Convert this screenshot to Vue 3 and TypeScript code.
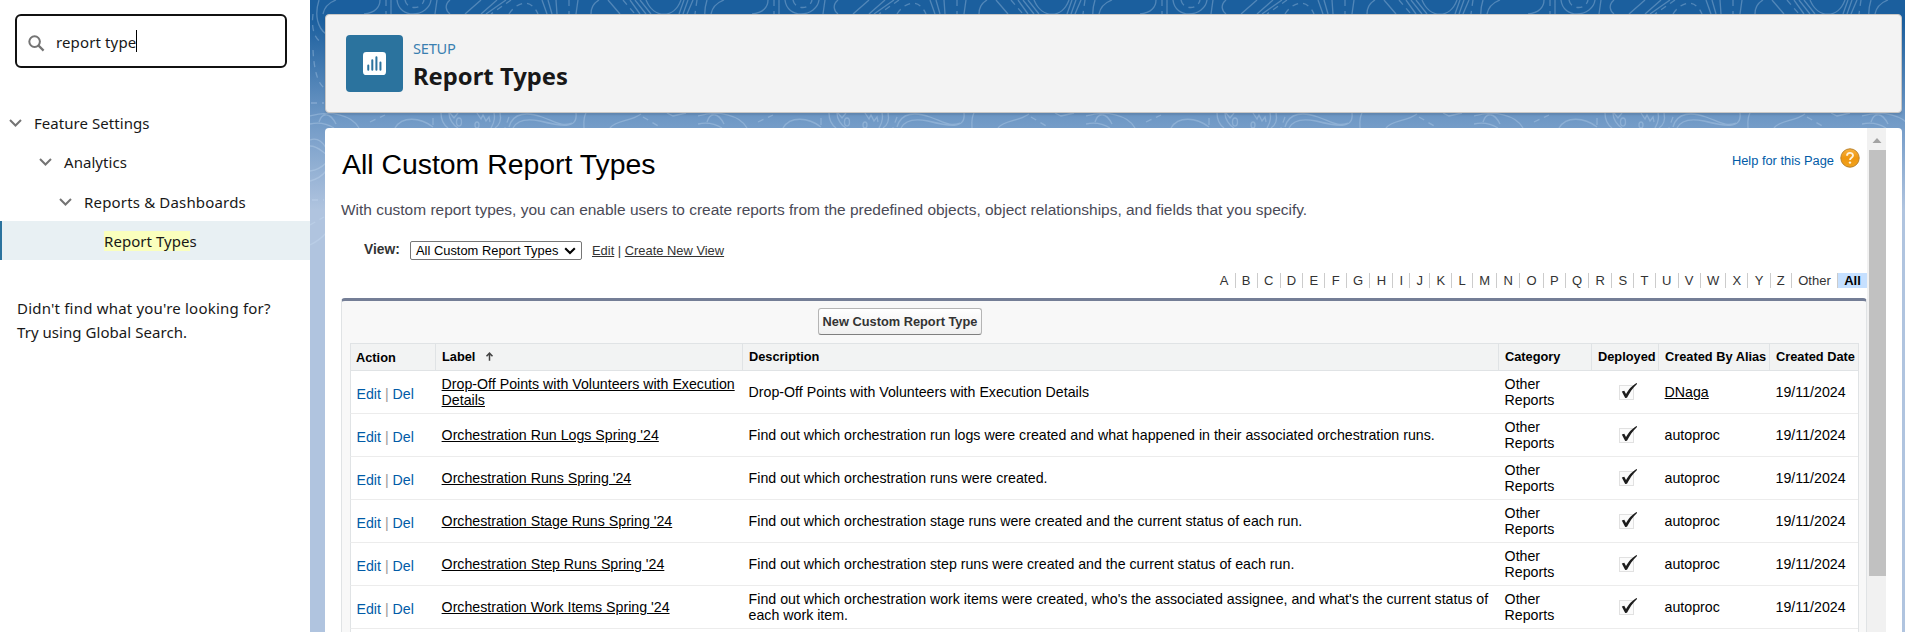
<script setup lang="ts">
interface ReportType {
  label: string
  description: string
  alias: string
  linked?: boolean
}

const letters: string[] = [...'ABCDEFGHIJKLMNOPQRSTUVWXYZ', 'Other']

const columns: string[] = ['Action', 'Label', 'Description', 'Category', 'Deployed', 'Created By Alias', 'Created Date']

const rows: ReportType[] = [
  {
    label: 'Drop-Off Points with Volunteers with Execution Details',
    description: 'Drop-Off Points with Volunteers with Execution Details',
    alias: 'DNaga',
    linked: true,
  },
  {
    label: "Orchestration Run Logs Spring '24",
    description:
      'Find out which orchestration run logs were created and what happened in their associated orchestration runs.',
    alias: 'autoproc',
  },
  {
    label: "Orchestration Runs Spring '24",
    description: 'Find out which orchestration runs were created.',
    alias: 'autoproc',
  },
  {
    label: "Orchestration Stage Runs Spring '24",
    description: 'Find out which orchestration stage runs were created and the current status of each run.',
    alias: 'autoproc',
  },
  {
    label: "Orchestration Step Runs Spring '24",
    description: 'Find out which orchestration step runs were created and the current status of each run.',
    alias: 'autoproc',
  },
  {
    label: "Orchestration Work Items Spring '24",
    description:
      "Find out which orchestration work items were created, who's the associated assignee, and what's the current status of each work item.",
    alias: 'autoproc',
  },
]
</script>

<template>
  <div class="app">
    <aside class="sidebar">
      <div class="search">
        <svg class="search-icon" width="17" height="17" viewBox="0 0 17 17">
          <circle cx="6.6" cy="6.6" r="5.3" fill="none" stroke="#747474" stroke-width="2" />
          <path d="M10.6 10.6L15.6 15.6" stroke="#747474" stroke-width="2.2" />
        </svg>
        <span class="query">report type</span><span class="caret"></span>
      </div>
      <nav class="tree">
        <div class="node level-1">
          <svg class="chev" width="13" height="8" viewBox="0 0 13 8"><path d="M1 1L6.5 6.5L12 1" /></svg>
          <span>Feature Settings</span>
        </div>
        <div class="node level-2">
          <svg class="chev" width="13" height="8" viewBox="0 0 13 8"><path d="M1 1L6.5 6.5L12 1" /></svg>
          <span>Analytics</span>
        </div>
        <div class="node level-3">
          <svg class="chev" width="13" height="8" viewBox="0 0 13 8"><path d="M1 1L6.5 6.5L12 1" /></svg>
          <span class="wide">Reports &amp; Dashboards</span>
        </div>
        <div class="node selected"><span><mark>Report Type</mark>s</span></div>
      </nav>
      <p class="hint">Didn't find what you're looking for?<br /><span class="hint-action">Try using Global Search.</span></p>
    </aside>

    <main class="main">
      <svg class="topo" width="1595" height="260">
        <defs>
          <pattern id="contours" width="388" height="260" patternUnits="userSpaceOnUse">
            <g class="contour">
              <path d="M26 0C18 3 14 9 13 14M70 0C70 7 65 13 54 14M81 0V14M87 0C88 10 96 14 103 14C112 14 120 8 121 0M127 0L125 14M140 0C134 5 136 11 140 14" />
              <path d="M171 0L155 14M187 0L171 14M196 0L176 14M232 0L237 14M238 0L242 14M246 0L247 14M268 0L266 14M289 0C282 4 281 9 281 14" />
              <path d="M298 0L310 14M320 0L330 14M325 0L336 14M330 0L341 14M336 0C344 19 364 19 371 0M374 0L369 14M378 0L373 14M383 0L377 14" />
              <path class="dash" d="M76 0V14M95 0C97 10 112 10 114 0M201 0L181 14M199 14C205 4 220 -4 228 14M259 0V14M313 0L325 14M387 0L385 14" />
              <path d="M0 124C8 122 16 123 24 128M9 122C12 112 20 112 26 124M0 116C20 110 42 115 49 128M85 128C92 116 110 117 123 127M123 118V125" />
              <path d="M131 113C131 121 134 125 138 128M139 113c0 6 4 12 9 15M140 113l4 5l4 -5M167 113l4 6l2 -4l3 6l3 -4l1 5M190 113C192 122 188 126 185 128M184 113C186 120 183 124 181 128" />
              <ellipse cx="149" cy="122" rx="2.5" ry="4" />
              <ellipse cx="167" cy="125" rx="2" ry="3" />
              <path d="M203 128C208 118 220 119 230 121C250 126 268 130 266 113M199 127C203 112 218 112 232 117C246 122 252 127 262 123M276 113C273 118 274 124 274 128M300 128C306 120 320 122 331 114M357 113l6 3l13 -3" />
              <path class="dash" d="M60 122L75 115M199 117L195 128M333 117L350 127" />
              <path d="M9 0C4 16 8 28 16 34M0 140C8 137 13 143 16 148M0 146C8 146 12 152 16 154M0 171C8 170 12 167 16 163M0 181C8 179 12 176 16 171M0 245Q10 240 16 233" />
              <path class="dash" d="M3 14C1 30 5 40 13 43M3 50C4 70 8 85 15 88M1 103H14M2 200H14M0 225L14 217" />
            </g>
          </pattern>
        </defs>
        <rect width="1595" height="260" fill="url(#contours)" />
      </svg>

      <header class="page-header">
        <div class="setup-icon">
          <svg width="23" height="23" viewBox="0 0 24 24">
            <rect width="24" height="24" rx="3.5" fill="#fff" />
            <path d="M5.5 14V18.5M9.7 8.5V18.5M14 5.5V18.5M18.2 11V18.5" stroke="#2b739e" stroke-width="2.1" stroke-linecap="round" />
          </svg>
        </div>
        <div class="heading">
          <span class="eyebrow">SETUP</span>
          <h1>Report Types</h1>
        </div>
      </header>

      <section class="panel">
        <div class="content">
          <div class="title-row">
            <h2>All Custom Report Types</h2>
            <a class="help">
              <span>Help for this Page</span>
              <svg width="20" height="20" viewBox="0 0 20 20">
                <defs>
                  <linearGradient id="orb" x1="0" y1="0" x2="0" y2="1">
                    <stop offset="0" stop-color="#f9b23f" />
                    <stop offset="0.5" stop-color="#ee960f" />
                    <stop offset="1" stop-color="#f2a31c" />
                  </linearGradient>
                </defs>
                <circle cx="10" cy="10" r="9.2" fill="url(#orb)" stroke="#b9822c" stroke-width="1" />
                <path d="M7 7.8C7 3.9 13 3.9 13 7.5C13 9.8 10 9.7 10 12" fill="none" stroke="#fff3dc" stroke-width="1.9" />
                <circle cx="10" cy="14.6" r="1.2" fill="#fff3dc" />
              </svg>
            </a>
          </div>
          <p class="intro">With custom report types, you can enable users to create reports from the predefined objects, object relationships, and fields that you specify.</p>
          <div class="view-row">
            <b>View:</b>
            <div class="select">
              <span>All Custom Report Types</span>
              <svg width="12" height="8" viewBox="0 0 12 8"><path d="M1.2 1.2L6 6L10.8 1.2" fill="none" stroke="#000" stroke-width="2.1" /></svg>
            </div>
            <span class="view-links"><u>Edit</u> | <u>Create New View</u></span>
          </div>
          <div class="rolodex">
            <span v-for="l in letters" :key="l" class="letter">{{ l }}</span>
            <span class="letter all">All</span>
          </div>
          <div class="list">
            <div class="toolbar"><button>New Custom Report Type</button></div>
            <table>
              <colgroup>
                <col class="c-action" /><col class="c-label" /><col class="c-desc" /><col class="c-cat" />
                <col class="c-dep" /><col class="c-alias" /><col class="c-date" />
              </colgroup>
              <thead>
                <tr>
                  <th v-for="c in columns" :key="c" :class="{ action: c === 'Action' }">
                    {{ c }}
                    <svg v-if="c === 'Label'" class="sort" width="9" height="9" viewBox="0 0 9 9">
                      <path d="M4.5 8.8V1.5M1.5 4.3L4.5 1.2L7.5 4.3" fill="none" stroke="#444" stroke-width="1.5" />
                    </svg>
                  </th>
                </tr>
              </thead>
              <tbody>
                <tr v-for="r in rows" :key="r.label">
                  <td class="action"><a>Edit</a><i> | </i><a>Del</a></td>
                  <td><u>{{ r.label }}</u></td>
                  <td>{{ r.description }}</td>
                  <td class="category">Other Reports</td>
                  <td class="deployed">
                    <svg width="21" height="20" viewBox="0 0 21 20">
                      <rect x="1.5" y="3.5" width="14" height="14" fill="#fbfbfb" stroke="#c4c4c4" stroke-dasharray="1 1" />
                      <path d="M3.8 9.5L6.3 8.7L8 12.1C10.5 7.5 14.5 3 19 1L19 2C14.5 6 11.5 11 9 15.8L7.2 16Z" fill="#1c1c1c" />
                    </svg>
                  </td>
                  <td><u v-if="r.linked">{{ r.alias }}</u><template v-else>{{ r.alias }}</template></td>
                  <td>19/11/2024</td>
                </tr>
                <tr class="cut"><td v-for="c in columns" :key="c" :class="{ action: c === 'Action' }"></td></tr>
              </tbody>
            </table>
          </div>
        </div>
        <div class="scrollbar">
          <svg width="17" height="22" viewBox="0 0 17 22"><path d="M3.5 15L8 10L12.5 15Z" fill="#a3a3a3" /></svg>
          <div class="thumb"></div>
        </div>
      </section>
    </main>
  </div>
</template>

<style>
html,
body {
  margin: 0;
  overflow: hidden;
}
</style>

<style scoped>
.app {
  display: flex;
  width: 1905px;
  height: 632px;
  overflow: hidden;
  background: #fff;
  font-family: 'Liberation Sans', Arial, sans-serif;
}
.sidebar {
  width: 310px;
  flex: none;
  box-sizing: border-box;
  padding-top: 14px;
  font: 15px/24px 'Noto Sans', sans-serif;
  color: #181818;
}
.search {
  display: flex;
  align-items: center;
  box-sizing: border-box;
  width: 272px;
  height: 54px;
  margin-left: 15px;
  padding-left: 11px;
  border: 2px solid #111;
  border-radius: 6px;
}
.search-icon {
  margin: 4px 11px 0 0;
}
.query {
  margin-top: 1px;
  letter-spacing: 0.13px;
}
.caret {
  width: 1px;
  height: 22px;
  background: #000;
}
.tree {
  padding-top: 35px;
}
.node {
  display: flex;
  align-items: center;
  height: 39.3px;
  box-sizing: border-box;
  letter-spacing: 0.05px;
}
.chev {
  margin-right: 12px;
}
.chev path {
  fill: none;
  stroke: #747474;
  stroke-width: 2;
}
.level-1 {
  padding-left: 9px;
}
.level-2 {
  padding-left: 39px;
}
.level-3 {
  height: 39.4px;
  padding: 1px 0 0 59px;
}
.wide {
  letter-spacing: 0.17px;
}
.selected {
  height: 39px;
  padding: 1px 0 0 102px;
  border-left: 2px solid #2b739e;
  background: #e8f0f3;
}
mark {
  background: #faffbd;
  color: inherit;
}
.hint {
  margin: 36px 0 0 17px;
  white-space: nowrap;
  letter-spacing: 0.2px;
}
.hint-action {
  letter-spacing: 0.05px;
}
.main {
  position: relative;
  flex: 1;
  min-width: 0;
  box-sizing: border-box;
  padding: 14px 3px 0 15px;
  background: linear-gradient(#1b5f9e 0, #1b5f9e 20px, #7099c6 120px, #b0c4df 210px);
}
.topo {
  position: absolute;
  left: 0;
  top: 0;
}
.contour {
  fill: none;
  stroke: #cfe3f7;
  stroke-opacity: 0.3;
  stroke-width: 1.3;
}
.dash {
  stroke-dasharray: 6 5;
}
.page-header {
  position: relative;
  display: flex;
  box-sizing: border-box;
  height: 99px;
  padding: 20px;
  border: 1px solid #c9c7c5;
  border-radius: 4px;
  background: #f3f3f3;
  box-shadow: 0 2px 2px rgba(0, 0, 0, 0.1);
}
.setup-icon {
  display: flex;
  align-items: center;
  justify-content: center;
  width: 57px;
  height: 57px;
  border-radius: 4px;
  background: #2b739e;
}
.setup-icon svg {
  margin: -1px 1px 0 0;
}
.heading {
  margin-left: 10px;
  padding-top: 3px;
  font-family: 'Noto Sans', sans-serif;
}
.eyebrow {
  display: block;
  font-size: 14.6px;
  line-height: 20px;
  letter-spacing: -0.25px;
  color: #3a7fb0;
}
h1 {
  margin: 2px 0 0;
  font-size: 23.8px;
  line-height: 32px;
  font-weight: 700;
  color: #181818;
  white-space: nowrap;
}
.panel {
  position: relative;
  display: flex;
  height: 504px;
  margin-top: 15px;
  border-radius: 4px 4px 0 0;
  background: #fff;
}
.content {
  width: 1526px;
  flex: none;
  margin-left: 16px;
}
.title-row {
  display: flex;
  justify-content: space-between;
  height: 62px;
  padding: 20px 7px 0 1px;
  box-sizing: border-box;
}
h2 {
  margin: -1px 0 0;
  font-size: 28.4px;
  line-height: 34px;
  font-weight: 400;
  color: #000;
}
.help {
  display: flex;
  height: 20px;
  gap: 6px;
  font-size: 12.85px;
  line-height: 25px;
  color: #015ba7;
}
.intro {
  margin: 11px 0 0;
  font-size: 15.47px;
  line-height: 18px;
  color: #4a4a56;
  white-space: nowrap;
}
.view-row {
  display: flex;
  height: 19px;
  margin-top: 22px;
  padding-left: 23px;
  font-size: 12.9px;
  line-height: 19px;
  color: #333;
}
.view-row b {
  width: 46px;
  line-height: 17px;
  font-size: 13.8px;
}
.select {
  display: flex;
  align-items: center;
  justify-content: space-between;
  box-sizing: border-box;
  width: 172px;
  height: 19px;
  padding: 0 5px;
  border: 1px solid #767676;
  border-radius: 2px;
  color: #000;
  white-space: nowrap;
}
.view-links {
  margin-left: 10px;
}
.rolodex {
  display: flex;
  justify-content: flex-end;
  height: 15px;
  margin-top: 13px;
  font-size: 13px;
  line-height: 15px;
  color: #333;
}
.letter {
  padding: 0 6.23px;
  border-right: 1px solid #ccc;
}
.letter.all {
  border: 0;
  background: #c6e0ff;
  font-weight: 700;
  color: #000;
}
.list {
  box-sizing: border-box;
  width: 1526px;
  height: 344px;
  margin: 10px 0 0;
  padding: 0 8px;
  border: 1px solid #e0e3e5;
  border-top: 3px solid #747e96;
  border-radius: 4px 4px 0 0;
  background: #f8f8f8;
  overflow: hidden;
}
.toolbar {
  height: 42px;
  box-sizing: border-box;
  padding: 7px 0 0 468px;
}
button {
  display: block;
  width: 164px;
  height: 27px;
  padding: 0;
  border: 1px solid #b5b5b5;
  border-bottom-color: #7f7f7f;
  border-radius: 3px;
  background: linear-gradient(#fff, #f0f0f0);
  font: 700 12.8px 'Liberation Sans', Arial, sans-serif;
  color: #333;
  white-space: nowrap;
}
table {
  width: 1509px;
  table-layout: fixed;
  border-collapse: separate;
  border-spacing: 0;
  background: #fff;
  border-right: 1px solid #e0e3e5;
}
.c-action {
  width: 85px;
}
.c-label {
  width: 307px;
}
.c-desc {
  width: 756px;
}
.c-cat {
  width: 93px;
}
.c-dep {
  width: 67px;
}
.c-alias {
  width: 111px;
}
.c-date {
  width: 89px;
}
th {
  height: 28px;
  box-sizing: border-box;
  padding: 0 0 0 6px;
  border: 1px solid #e0e3e5;
  border-right: 0;
  background: #f2f3f3;
  font-size: 12.8px;
  line-height: 16px;
  text-align: left;
  white-space: nowrap;
  color: #000;
}
th.action {
  padding-top: 2px;
  padding-left: 5px;
}
.sort {
  margin-left: 6px;
}
td {
  height: 43px;
  box-sizing: border-box;
  padding: 0 6px;
  border-bottom: 1px solid #ececec;
  font-size: 14.19px;
  line-height: 16px;
  color: #000;
}
td:nth-child(n + 2) {
  padding-left: 6.6px;
}
td.action {
  padding: 4px 0 0 5.5px;
  border-left: 1px solid #e0e3e5;
  color: #015ba7;
}
td i {
  font-style: normal;
  color: #999;
}
td.category {
  padding-right: 20px;
}
td.deployed svg {
  display: block;
  margin-left: 20px;
}
.scrollbar {
  width: 17px;
  padding-left: 2px;
  background: #f1f1f1;
}
.scrollbar svg {
  display: block;
}
.thumb {
  height: 426px;
  background: #c1c1c1;
}
</style>
